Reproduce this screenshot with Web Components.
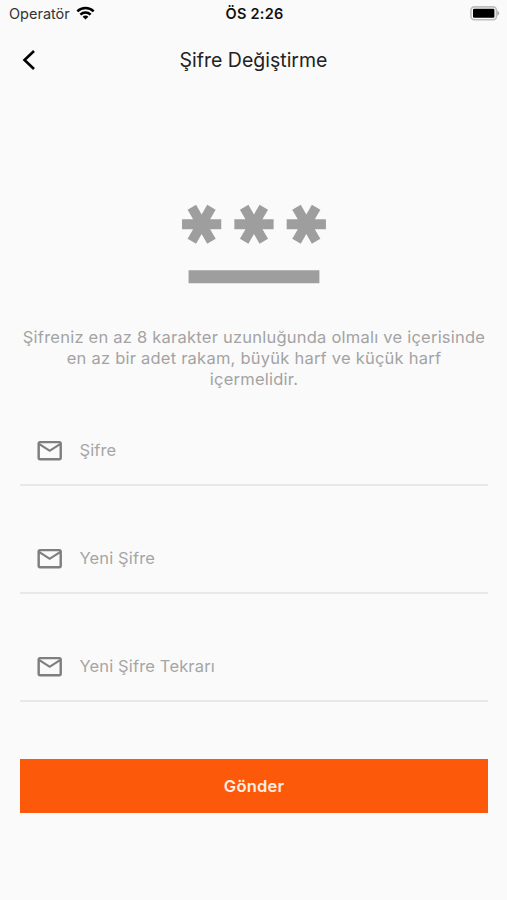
<!DOCTYPE html>
<html lang="tr"><head><meta charset="utf-8"><title>Şifre Değiştirme</title>
<style>
html,body{margin:0;height:100%;background:#fafafa}
body{font-family:Inter,"Liberation Sans",sans-serif}
</style></head><body>
<password-screen></password-screen>
<script>
const define=(name,html)=>customElements.define(name,class extends HTMLElement{
  constructor(){super();this.attachShadow({mode:'open'}).innerHTML=html;}
});
define('status-bar',`<style>
:host{display:grid;grid-template-columns:1fr auto 1fr;align-items:center;height:27px;padding:0 7px 0 9px;color:#111;font-size:14.5px}
.left{display:flex;align-items:center;gap:6px;color:#333}
.left svg{margin-top:-2px}
.time{font-weight:600;letter-spacing:.25px}
.battery{justify-self:end}
svg{display:block}
</style>
<div class="left"><span>Operatör</span><svg width="19" height="14" viewBox="0 0 20 14" fill="none" stroke="#000" stroke-width="2.6"><path d="M1.4 5.2a12.2 12.2 0 0 1 17.2 0M4.6 8.600a7.700 7.700 0 0 1 10.8 0"/><path d="M10 13.8 7 10.9a4.200 4.200 0 0 1 6 0z" fill="#000" stroke="none"/></svg></div>
<span class="time">ÖS 2:26</span>
<svg class="battery" width="30" height="15" viewBox="0 0 30 15"><rect x=".9" y=".9" width="25.6" height="12.8" rx="3.5" fill="#fafafa" stroke="#bdbdbd" stroke-width="1.6"/><rect x="3" y="2.800" width="21.4" height="9" rx="1.2" fill="#000"/><path d="M27.3 4.600q3.800 2.700 0 5.400z" fill="#aaa"/></svg>`);
define('nav-header',`<style>
:host{display:grid;grid-template-columns:40px 1fr 40px;align-items:center;height:65px;color:#222;font-size:19.5px;text-align:center}
svg{display:block;margin-left:21px}
</style><svg width="16" height="22" viewBox="0 0 16 22" fill="none" stroke="#000" stroke-width="2.6"><path d="M13 2 3.500 11l9.500 9"/></svg><span><slot></slot></span>`);
define('password-icon',`<style>:host{display:block;width:157px;height:157px}svg{display:block}</style>
<svg width="157" height="157" viewBox="0.08 0 24 24" fill="#9e9e9e"><defs><path id="a" d="M3.15 12.95 4 11.47l.85 1.48 1.3-.75-.85-1.48H7v-1.5H5.3l.85-1.47L4.85 7 4 8.47 3.15 7l-1.3.75.85 1.47H1v1.5h1.7l-.85 1.48z"/></defs><use href="#a"/><use href="#a" x="8"/><use href="#a" x="16"/><path d="M2 17h20v2H2z"/></svg>`);
define('form-field',`<style>
:host{display:flex;align-items:center;box-sizing:border-box;height:70px;padding-left:15px;gap:15px;border-bottom:2px solid #e8e8e8;color:#a5a5a5;font-size:16.5px;letter-spacing:.15px}
svg{display:block;margin-top:2px}
</style><svg width="29.4" height="29.4" viewBox="0 0 24 24" fill="#7f7f7f"><path d="M22 6c0-1.1-.9-2-2-2H4c-1.100 0-2 .9-2 2v12c0 1.100.9 2 2 2h16c1.100 0 2-.9 2-2V6zm-2 0-8 5-8-5h16zm0 12H4V8l8 5 8-5v10z"/></svg><span><slot></slot></span>`);
define('submit-button',`<style>
:host{display:flex;align-items:center;justify-content:center;height:54px;background:#fc5a0a;color:#ffece0;font-size:16.5px;font-weight:600;letter-spacing:.2px}
</style><slot></slot>`);
define('password-screen',`<style>
:host{display:block;width:507px}
password-icon{margin:67px auto 0;padding-left:1px}
p{margin:11px 0 0;padding-left:1px;text-align:center;color:#a3a3a3;font-size:16.5px;line-height:21px;letter-spacing:.23px}
p span{display:block}
.form{display:flex;flex-direction:column;gap:38px;padding:26px 19px 0 20px}
submit-button{margin-top:19px}
</style><status-bar></status-bar><nav-header>Şifre Değiştirme</nav-header><password-icon></password-icon>
<p><span>Şifreniz en az 8 karakter uzunluğunda olmalı ve içerisinde</span><span>en az bir adet rakam, büyük harf ve küçük harf</span><span>içermelidir.</span></p>
<div class="form"><form-field>Şifre</form-field><form-field>Yeni Şifre</form-field><form-field>Yeni Şifre Tekrarı</form-field><submit-button>Gönder</submit-button></div>`);
</script></body></html>
